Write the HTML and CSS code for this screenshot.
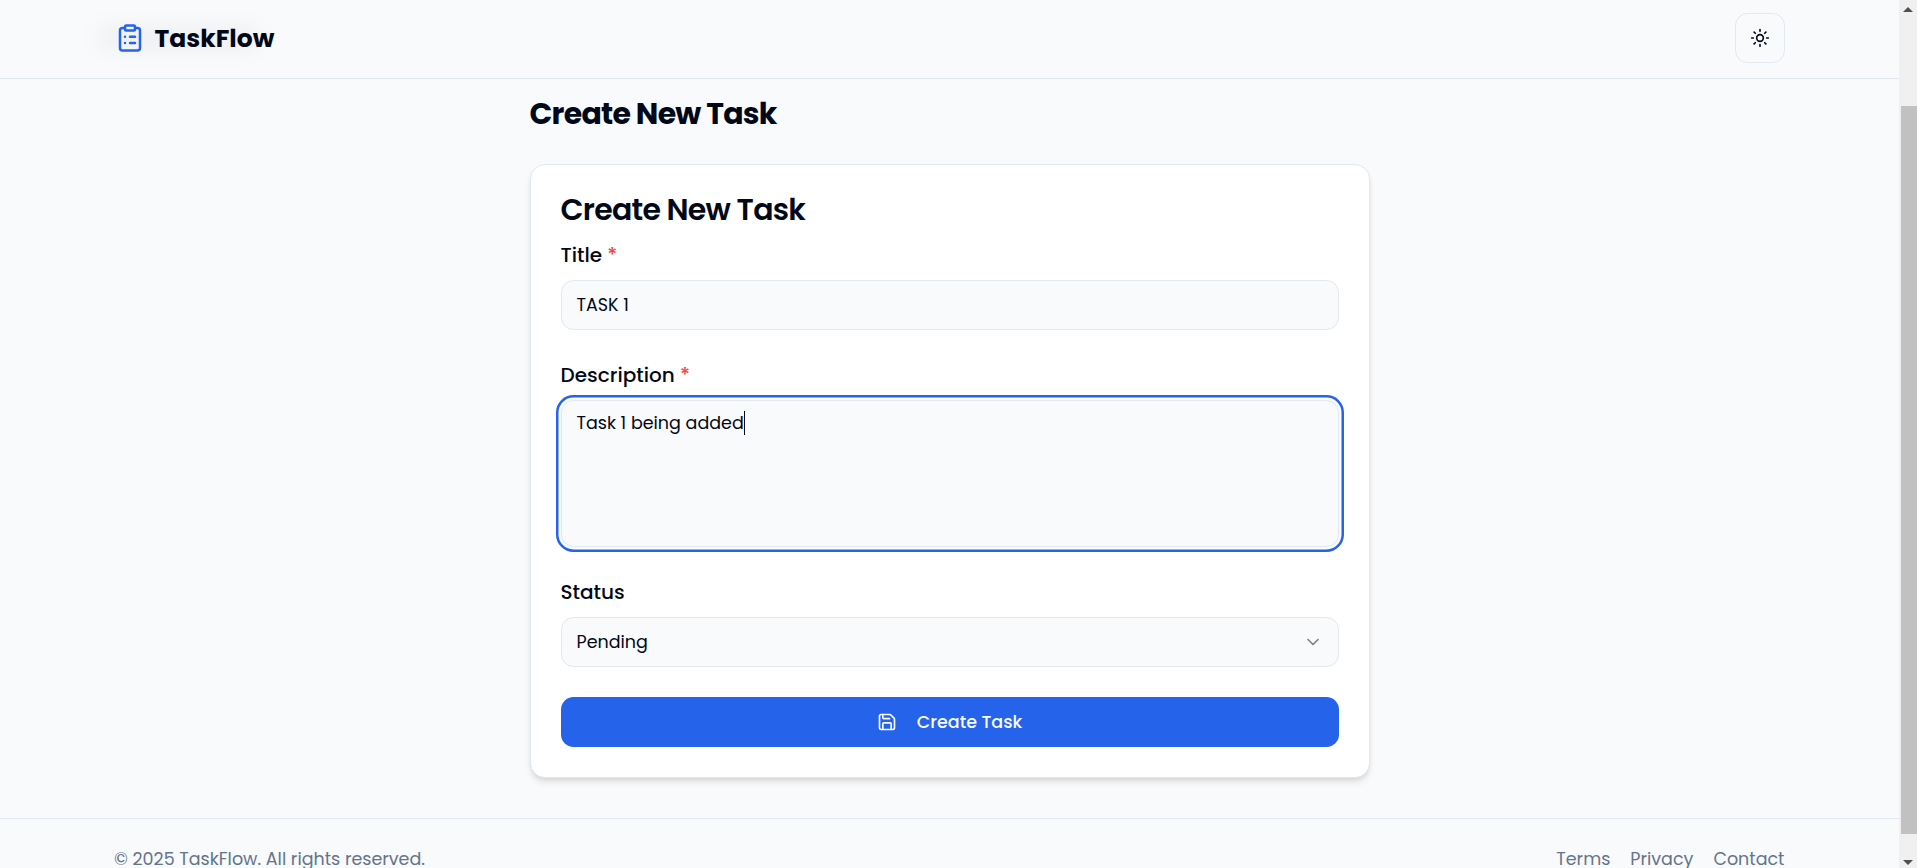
FILE: index.html
```html
<!DOCTYPE html>
<html lang="en">
<head>
<meta charset="utf-8">
<title>TaskFlow</title>
<link rel="stylesheet" href="styles.css">
</head>
<body>
<div class="page">
  <header class="header">
    <a class="brand">
      <svg class="brand-icon" viewBox="0 0 24 24"><rect x="8" y="2" width="8" height="4" rx="1"/><path d="M16 4h2a2 2 0 0 1 2 2v14a2 2 0 0 1-2 2H6a2 2 0 0 1-2-2V6a2 2 0 0 1 2-2h2"/><path d="M12 11h4M12 16h4M8 11h.01M8 16h.01"/></svg>
      <span class="brand-name">TaskFlow</span>
    </a>
    <button class="theme-toggle" aria-label="Toggle theme">
      <svg class="sun" viewBox="0 0 24 24"><circle cx="12" cy="12" r="4"/><path d="M12 2v2M12 20v2M4.93 4.93l1.41 1.41M17.66 17.66l1.41 1.41M2 12h2M20 12h2M6.34 17.66l-1.41 1.41M19.07 4.93l-1.41 1.41"/></svg>
    </button>
  </header>
  <main class="main">
    <h1 class="page-title">Create New Task</h1>
    <section class="card">
      <h2 class="card-title">Create New Task</h2>
      <div class="fields">
        <div class="field">
          <label class="label">Title <span class="required">*</span></label>
          <div class="control">TASK 1</div>
        </div>
        <div class="field">
          <label class="label">Description <span class="required">*</span></label>
          <div class="control textarea">Task 1 being added<span class="caret"></span></div>
        </div>
        <div class="field">
          <label class="label">Status</label>
          <div class="control select">Pending
            <svg class="chevron" viewBox="0 0 24 24"><path d="m6 9 6 6 6-6"/></svg>
          </div>
        </div>
      </div>
      <button class="submit">
        <svg class="save" viewBox="0 0 24 24"><path d="M15.2 3a2 2 0 0 1 1.4.6l3.8 3.8a2 2 0 0 1 .6 1.4V19a2 2 0 0 1-2 2H5a2 2 0 0 1-2-2V5a2 2 0 0 1 2-2z"/><path d="M17 21v-7a1 1 0 0 0-1-1H8a1 1 0 0 0-1 1v7M7 3v4a1 1 0 0 0 1 1h7"/></svg>
        <span>Create Task</span>
      </button>
    </section>
  </main>
  <footer class="footer">
    <span>© 2025 TaskFlow. All rights reserved.</span>
    <nav class="links"><a>Terms</a><a>Privacy</a><a>Contact</a></nav>
  </footer>
</div>
<aside class="scrollbar">
  <svg class="arrow" viewBox="0 0 10 5"><path d="M5 0l5 5H0z"/></svg>
  <div class="thumb"></div>
  <svg class="arrow arrow-down" viewBox="0 0 10 5"><path d="M0 0h10L5 5z"/></svg>
</aside>
</body>
</html>
```
FILE: styles.css
```css
* { box-sizing: border-box; }
body { margin: 0; width: 1917px; height: 868px; overflow: hidden; display: flex; background: #f9fafc; color: #020817; font-family: Poppins, Inter, "Liberation Sans", sans-serif; font-size: 17.5px; }
svg { fill: none; stroke: currentColor; stroke-width: 2; stroke-linecap: round; stroke-linejoin: round; flex: none; }
h1, h2 { margin: 0; }
button { font-family: inherit; padding: 0; }
.page { width: 1899px; height: 868px; overflow: hidden; }
.header { height: 79px; border-bottom: 1px solid #dfe7f0; padding: 0 114px 2px 114.5px; display: flex; justify-content: space-between; align-items: center; }
.brand { display: flex; align-items: center; gap: 10px; position: relative; }
.brand::before { content: ""; position: absolute; left: -16px; top: 6px; width: 160px; height: 18px; background: rgba(2, 8, 23, 0.055); filter: blur(11px); border-radius: 9px; }
.brand-icon { position: relative; width: 30px; height: 30px; color: #2563eb; }
.brand-name { position: relative; font-size: 25px; font-weight: 700; line-height: 30px; padding-top: 1px; }
.theme-toggle { width: 50px; height: 50px; border: 1px solid #e2e8f0; border-radius: 12.5px; background: #f9fafc; color: #020817; display: grid; place-items: center; }
.sun { width: 20px; height: 20px; }
.main { width: 840px; margin: 0 auto; padding-top: 17px; }
.page-title { font-size: 30px; line-height: 36px; font-weight: 700; letter-spacing: -0.025em; margin-bottom: 32px; }
.card { height: 614px; background: #fff; border: 1px solid #e2e8f0; border-radius: 15px; padding: 30px; box-shadow: 0 5px 7.5px -1px rgba(0, 0, 0, .1), 0 2.5px 5px -2.5px rgba(0, 0, 0, .1); }
.card-title { font-size: 30px; line-height: 30px; font-weight: 600; letter-spacing: -0.025em; margin-bottom: 16px; }
.fields { display: flex; flex-direction: column; gap: 31px; }
.label { display: block; font-size: 20px; line-height: 28px; font-weight: 500; margin-bottom: 11px; }
.required { color: #ef4444; }
.control { height: 50px; border: 1px solid #e2e8f0; border-radius: 12.5px; background: #f9fafc; padding: 0 15px; display: flex; align-items: center; line-height: 24px; }
.textarea { height: 147px; align-items: flex-start; padding-top: 10px; box-shadow: 0 0 0 2.5px #f9fafc, 0 0 0 5px #2563eb; }
.caret { width: 1px; height: 24px; background: #020817; }
.select { justify-content: space-between; }
.chevron { width: 20px; height: 20px; color: #7c818b; }
.submit { width: 100%; height: 50px; margin-top: 30px; border: 0; border-radius: 12.5px; background: #2563eb; color: #f8fafc; display: flex; justify-content: center; align-items: center; gap: 20px; font-size: 17.5px; font-weight: 500; }
.save { width: 20px; height: 20px; }
.footer { margin-top: 40px; height: 80px; border-top: 1px solid #e2e8f0; padding: 27px 114.5px 0 114px; display: flex; justify-content: space-between; color: #64748b; line-height: 26px; }
.links { display: flex; gap: 20px; }
.scrollbar { width: 18px; height: 868px; background: #f0f0f0; display: flex; flex-direction: column; align-items: center; padding-top: 7px; padding-bottom: 3px; }
.arrow { width: 10px; height: 5px; fill: #505050; stroke: none; }
.thumb { width: 16px; height: 728px; margin-top: 94px; align-self: flex-end; background: #c1c1c1; }
.arrow-down { margin-top: auto; }
```
